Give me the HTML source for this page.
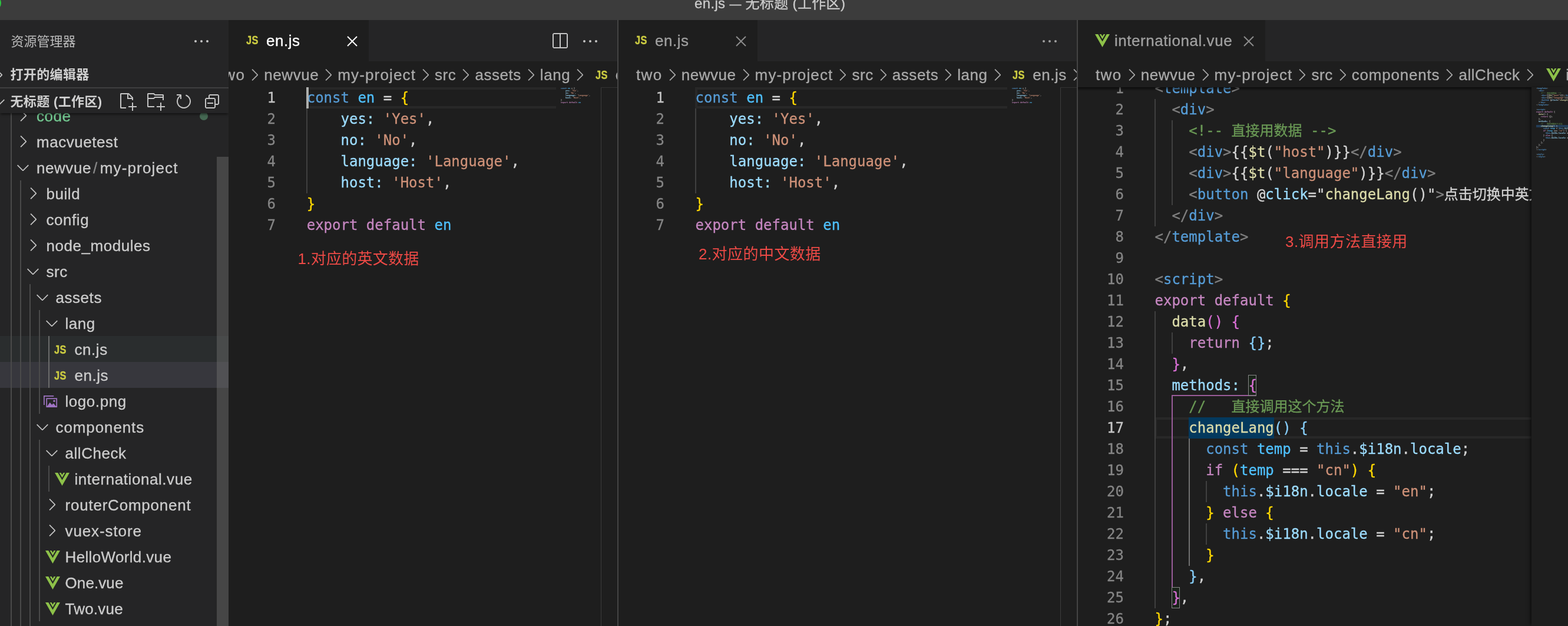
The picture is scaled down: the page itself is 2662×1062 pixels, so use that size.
<!DOCTYPE html>
<html lang="zh-CN"><head><meta charset="utf-8"><title>en.js — 无标题 (工作区)</title>
<style>
*{box-sizing:border-box}
html,body{margin:0;padding:0}
body{width:2662px;height:1062px;overflow:hidden;background:#1e1e1e;position:relative;
 font-family:"Liberation Sans","Noto Sans CJK SC",sans-serif;color:#cccccc}
div,svg{position:absolute}
#w{left:0;top:0;width:2662px;height:1062px;will-change:transform}
.titlebar{left:0;top:0;width:2662px;height:34px;background:#3c3c3c;overflow:hidden}
.title{left:1179px;top:-16px;height:44px;line-height:44px;font-size:24px;color:#cccccc;letter-spacing:.35px;white-space:nowrap}
.sidebar{left:0;top:34px;width:388px;height:1028px;background:#252526;overflow:hidden}
.sb{left:0;top:0;width:388px;height:1062px}
.tl,.tabt,.bct,.title{-webkit-text-stroke:.3px}
.tl{height:44px;line-height:44px;font-size:26px;letter-spacing:.55px;white-space:nowrap}
.tl .sep{color:#8a8a8a;margin:0 4px 0 3px;position:static}
.w2{position:static;letter-spacing:1.15px !important}
.w3{position:static;letter-spacing:1.4px !important}
.w4{position:static;letter-spacing:.8px !important}
.rowbg{left:0;width:388px;height:44px}
.js{font-weight:bold;line-height:28px;height:28px;white-space:nowrap;width:22px}
.js span,.bcjs span{position:static;display:inline-block;transform:scaleX(.78);transform-origin:0 50%;-webkit-text-stroke:.35px;letter-spacing:.6px}
.hdr{letter-spacing:.35px;font-size:22px;font-weight:bold;color:#d0d0d0;white-space:nowrap;height:44px;line-height:44px}
.tabs{top:34px;height:70px;background:#252526}
.tab{top:0;height:70px;background:#1e1e1e}
.tabt{top:0;height:70px;line-height:70px;font-size:26px;letter-spacing:.55px;white-space:nowrap}
.bc{top:104px;height:44px;overflow:hidden;background:#1e1e1e}
.bci{left:0;top:1px;height:44px;white-space:nowrap;display:flex;align-items:center;width:3000px}
.bci *{position:static;flex:none}
.bct{font-size:26px;letter-spacing:.55px;color:#a9a9a9;line-height:44px}
.bcc{margin:0}
.bcjs{font-weight:bold;font-size:21px;color:#cbcb41;margin:0 14px 0 10.6px;width:20px;display:inline-block;white-space:nowrap;line-height:28px}
.bcv{margin:0 8px 0 12.6px}
.ed{top:148px;height:914px;overflow:hidden;background:#1e1e1e}
.cl,.ln{font-family:"DejaVu Sans Mono","Liberation Mono","Noto Sans CJK SC",monospace;font-size:24px;height:36px;line-height:36px;white-space:pre}
.cl{color:#d4d4d4}
.cl,.ln{-webkit-text-stroke:.3px}
.cl span{position:static}
.ln{color:#858585;text-align:right}
.ln.act{color:#c6c6c6}
.k{color:#569cd6}.c{color:#4fc1ff}.p{color:#9cdcfe}.s{color:#ce9178}.x{color:#c586c0}
.b1{color:#ffd700}.b2{color:#da70d6}.b3{color:#87cefa}.g{color:#808080}.m{color:#6a9955}.f{color:#dcdcaa}
.bmb{border:1px solid #888888;background:rgba(0,100,0,.1);height:36px;width:14.4px}
.mm{transform:scale(.1384,.1111);transform-origin:0 0;width:1400px;height:1100px;opacity:.8}
.mm .cl{font-weight:bold}
.note{font-size:26px;color:#ee4a46;white-space:nowrap;height:40px;line-height:40px;letter-spacing:.45px}
.cur{height:36px;border:4px solid #282828;border-right:0}
</style></head>
<body><div id="w">
<div class="titlebar"><div style="left:-22px;top:-7px;width:24px;height:24px;border-radius:12px;background:#2bc840"></div><div class="title">en.js <span style="position:static;font-size:20px;letter-spacing:0">—</span> 无标题 (工作区)</div></div>
<div class="sidebar"><div class="sb" style="top:-34px">
<div class="rowbg" style="top:570px;background:#2a2d2e"></div>
<div class="rowbg" style="top:614px;background:#37373d"></div>
<div class="vl" style="left:18.0px;top:192px;height:870px;width:2px;background:#4a4a4a"></div>
<div class="vl" style="left:34.0px;top:306px;height:756px;width:2px;background:#4a4a4a"></div>
<div class="vl" style="left:50.0px;top:482px;height:580px;width:2px;background:#4a4a4a"></div>
<div class="vl" style="left:66.0px;top:526px;height:176px;width:2px;background:#4a4a4a"></div>
<div class="vl" style="left:82.0px;top:570px;height:88px;width:2px;background:#6b6b6b"></div>
<div class="vl" style="left:66.0px;top:746px;height:308px;width:2px;background:#4a4a4a"></div>
<div class="vl" style="left:82.0px;top:790px;height:44px;width:2px;background:#4a4a4a"></div>
<svg class="ic" style="left:23.0px;top:180.0px" width="32" height="32" viewBox="0 0 16 16"><path fill="#c5c5c5" d="M10.072 8.024L5.715 3.667l.618-.62L11 7.716v.618L6.333 13l-.618-.619 4.357-4.357z"/></svg>
<div class="tl" style="top:175px;left:62.0px;color:#73c991">code</div>
<div style="position:absolute;left:338.5px;top:190px;width:14px;height:14px;border-radius:7px;background:#73c991;opacity:.42"></div>
<svg class="ic" style="left:23.0px;top:224.0px" width="32" height="32" viewBox="0 0 16 16"><path fill="#c5c5c5" d="M10.072 8.024L5.715 3.667l.618-.62L11 7.716v.618L6.333 13l-.618-.619 4.357-4.357z"/></svg>
<div class="tl" style="top:219px;left:62.0px;color:#cccccc">macvuetest</div>
<svg class="ic" style="left:23.0px;top:268.0px" width="32" height="32" viewBox="0 0 16 16"><path fill="#c5c5c5" d="M7.976 10.072l4.357-4.357.62.618L8.284 11h-.618L3 6.333l.619-.618 4.357 4.357z"/></svg>
<div class="tl" style="top:263px;left:62.0px;color:#cccccc">newvue<span class="sep">/</span><span class="w2">my-project</span></div>
<svg class="ic" style="left:39.5px;top:312.0px" width="32" height="32" viewBox="0 0 16 16"><path fill="#c5c5c5" d="M10.072 8.024L5.715 3.667l.618-.62L11 7.716v.618L6.333 13l-.618-.619 4.357-4.357z"/></svg>
<div class="tl" style="top:307px;left:78.5px;color:#cccccc">build</div>
<svg class="ic" style="left:39.5px;top:356.0px" width="32" height="32" viewBox="0 0 16 16"><path fill="#c5c5c5" d="M10.072 8.024L5.715 3.667l.618-.62L11 7.716v.618L6.333 13l-.618-.619 4.357-4.357z"/></svg>
<div class="tl" style="top:351px;left:78.5px;color:#cccccc">config</div>
<svg class="ic" style="left:39.5px;top:400.0px" width="32" height="32" viewBox="0 0 16 16"><path fill="#c5c5c5" d="M10.072 8.024L5.715 3.667l.618-.62L11 7.716v.618L6.333 13l-.618-.619 4.357-4.357z"/></svg>
<div class="tl" style="top:395px;left:78.5px;color:#cccccc">node_modules</div>
<svg class="ic" style="left:39.5px;top:444.0px" width="32" height="32" viewBox="0 0 16 16"><path fill="#c5c5c5" d="M7.976 10.072l4.357-4.357.62.618L8.284 11h-.618L3 6.333l.619-.618 4.357 4.357z"/></svg>
<div class="tl" style="top:439px;left:78.5px;color:#cccccc">src</div>
<svg class="ic" style="left:55.5px;top:488.0px" width="32" height="32" viewBox="0 0 16 16"><path fill="#c5c5c5" d="M7.976 10.072l4.357-4.357.62.618L8.284 11h-.618L3 6.333l.619-.618 4.357 4.357z"/></svg>
<div class="tl" style="top:483px;left:94.5px;color:#cccccc">assets</div>
<svg class="ic" style="left:71.5px;top:532.0px" width="32" height="32" viewBox="0 0 16 16"><path fill="#c5c5c5" d="M7.976 10.072l4.357-4.357.62.618L8.284 11h-.618L3 6.333l.619-.618 4.357 4.357z"/></svg>
<div class="tl" style="top:527px;left:110.5px;color:#cccccc">lang</div>
<div class="js" style="left:91.5px;top:578.7px;font-size:21px;color:#cbcb41"><span>JS</span></div>
<div class="tl" style="top:571px;left:126.5px;color:#cccccc">cn.js</div>
<div class="js" style="left:91.5px;top:622.7px;font-size:21px;color:#cbcb41"><span>JS</span></div>
<div class="tl" style="top:615px;left:126.5px;color:#cccccc">en.js</div>
<svg class="ic" style="left:74.0px;top:670.5px" width="24" height="21" viewBox="0 0 24 21"><path fill="none" stroke="#a074c4" stroke-width="1.7" d="M0.9 16V0.9h16.3"/><rect x="5.2" y="5.2" width="17" height="14" fill="none" stroke="#a074c4" stroke-width="1.7"/><path fill="#a074c4" d="M5.5 19l5.2-7.2 3.4 4 2.6-2.6 5 5.8z"/><circle cx="18" cy="9.3" r="1.7" fill="#a074c4"/></svg>
<div class="tl" style="top:659px;left:110.5px;color:#cccccc">logo.png</div>
<svg class="ic" style="left:55.5px;top:708.0px" width="32" height="32" viewBox="0 0 16 16"><path fill="#c5c5c5" d="M7.976 10.072l4.357-4.357.62.618L8.284 11h-.618L3 6.333l.619-.618 4.357 4.357z"/></svg>
<div class="tl" style="top:703px;left:94.5px;color:#cccccc;letter-spacing:0.90px">components</div>
<svg class="ic" style="left:71.5px;top:752.0px" width="32" height="32" viewBox="0 0 16 16"><path fill="#c5c5c5" d="M7.976 10.072l4.357-4.357.62.618L8.284 11h-.618L3 6.333l.619-.618 4.357 4.357z"/></svg>
<div class="tl" style="top:747px;left:110.5px;color:#cccccc">allCheck</div>
<svg class="ic" style="left:93.0px;top:802.0px" width="25" height="22" viewBox="0 0 25 22"><path fill="#8dc149" d="M0 0h5.2l7.3 12.6L19.8 0H25L12.5 22z"/><path fill="#8dc149" d="M7.6 0h2.9l2 3.5 2-3.5h2.9l-4.9 8.6z"/></svg>
<div class="tl" style="top:791px;left:126.5px;color:#cccccc">international.vue</div>
<svg class="ic" style="left:71.5px;top:840.0px" width="32" height="32" viewBox="0 0 16 16"><path fill="#c5c5c5" d="M10.072 8.024L5.715 3.667l.618-.62L11 7.716v.618L6.333 13l-.618-.619 4.357-4.357z"/></svg>
<div class="tl" style="top:835px;left:110.5px;color:#cccccc;letter-spacing:0.78px">routerComponent</div>
<svg class="ic" style="left:71.5px;top:884.0px" width="32" height="32" viewBox="0 0 16 16"><path fill="#c5c5c5" d="M10.072 8.024L5.715 3.667l.618-.62L11 7.716v.618L6.333 13l-.618-.619 4.357-4.357z"/></svg>
<div class="tl" style="top:879px;left:110.5px;color:#cccccc;letter-spacing:0.90px">vuex-store</div>
<svg class="ic" style="left:77.0px;top:934.0px" width="25" height="22" viewBox="0 0 25 22"><path fill="#8dc149" d="M0 0h5.2l7.3 12.6L19.8 0H25L12.5 22z"/><path fill="#8dc149" d="M7.6 0h2.9l2 3.5 2-3.5h2.9l-4.9 8.6z"/></svg>
<div class="tl" style="top:923px;left:110.5px;color:#cccccc;letter-spacing:0.35px">HelloWorld.vue</div>
<svg class="ic" style="left:77.0px;top:978.0px" width="25" height="22" viewBox="0 0 25 22"><path fill="#8dc149" d="M0 0h5.2l7.3 12.6L19.8 0H25L12.5 22z"/><path fill="#8dc149" d="M7.6 0h2.9l2 3.5 2-3.5h2.9l-4.9 8.6z"/></svg>
<div class="tl" style="top:967px;left:110.5px;color:#cccccc;letter-spacing:0.10px">One.vue</div>
<svg class="ic" style="left:77.0px;top:1022.0px" width="25" height="22" viewBox="0 0 25 22"><path fill="#8dc149" d="M0 0h5.2l7.3 12.6L19.8 0H25L12.5 22z"/><path fill="#8dc149" d="M7.6 0h2.9l2 3.5 2-3.5h2.9l-4.9 8.6z"/></svg>
<div class="tl" style="top:1011px;left:110.5px;color:#cccccc;letter-spacing:0.22px">Two.vue</div>
<div style="left:368px;top:266px;width:20px;height:800px;background:rgba(121,121,121,.4)"></div>
<div style="left:0;top:34px;width:388px;height:158px;background:#252526;box-shadow:0 3px 4px -1px rgba(0,0,0,.55)"></div>
<div style="left:18.5px;top:49px;height:44px;line-height:44px;font-size:22px;color:#bbbbbb;white-space:nowrap">资源管理器</div>
<svg class="ic" style="left:326.0px;top:54.0px" width="32" height="32" viewBox="0 0 16 16"><circle cx="3" cy="8" r="1" fill="#c5c5c5"/><circle cx="8" cy="8" r="1" fill="#c5c5c5"/><circle cx="13" cy="8" r="1" fill="#c5c5c5"/></svg>
<div class="hdr" style="left:17.5px;top:104.5px">打开的编辑器</div>
<svg class="ic" style="left:-18.0px;top:111.0px" width="32" height="32" viewBox="0 0 16 16"><path fill="#c5c5c5" d="M10.072 8.024L5.715 3.667l.618-.62L11 7.716v.618L6.333 13l-.618-.619 4.357-4.357z"/></svg>
<div style="left:0;top:148px;width:388px;height:2px;background:#3f3f40"></div>
<div class="hdr" style="left:17.5px;top:151px">无标题 (工作区)</div>
<svg class="ic" style="left:-18.0px;top:157.0px" width="32" height="32" viewBox="0 0 16 16"><path fill="#c5c5c5" d="M7.976 10.072l4.357-4.357.62.618L8.284 11h-.618L3 6.333l.619-.618 4.357 4.357z"/></svg>
<svg class="ic" style="left:200px;top:156px" width="32" height="32" viewBox="0 0 16 16"><path fill="#c5c5c5" d="M9.5 1.1l3.4 3.5.1.4v2h-1V6H8V2H3v11h4v1H2.5l-.5-.5v-12l.5-.5h6.7l.3.1zM9 2v3h2.9L9 2zm4 14h-1v-3H9v-1h3V9h1v3h3v1h-3v3z"/></svg>
<svg class="ic" style="left:248px;top:156px" width="32" height="32" viewBox="0 0 16 16"><path fill="#c5c5c5" d="M14.5 2H7.71l-.85-.85L6.51 1h-5l-.5.5v11l.5.5H7v-1H1.99V6h4.49l.35-.15.86-.86H14v1.5l-.001.51h1.011V2.5L14.5 2zm-.51 2h-6.5l-.35.15-.86.86H2v-3h4.29l.85.85.36.15H14l-.01.99zM13 16h-1v-3H9v-1h3V9h1v3h3v1h-3v3z"/></svg>
<svg class="ic" style="left:296px;top:156px" width="32" height="32" viewBox="0 0 16 16"><path fill="#c5c5c5" d="M4.681 3H2V2h3.5l.5.5V6H5V4a5 5 0 1 0 4.53-.761l.302-.954A6 6 0 1 1 4.681 3z"/></svg>
<svg class="ic" style="left:344px;top:156px" width="32" height="32" viewBox="0 0 16 16"><path fill="#c5c5c5" d="M9 9H4v1h5V9z"/><path fill="#c5c5c5" d="M5 3l1-1h7l1 1v7l-1 1h-2v2l-1 1H3l-1-1V6l1-1h2V3zm1 2h4l1 1v4h2V3H6v2zm4 1H3v7h7V6z"/></svg>
</div></div>
<div class="tabs" style="left:388px;width:660px"></div>
<div class="tab" style="left:388px;top:34px;width:238px"></div>
<div class="js" style="left:418.0px;top:54.2px;font-size:21px;color:#cbcb41"><span>JS</span></div>
<div class="tabt" style="left:452px;top:34px;color:#ffffff">en.js</div>
<svg class="ic" style="left:581.5px;top:54.0px" width="32" height="32" viewBox="0 0 16 16"><path fill="#ffffff" d="M8 8.707l3.646 3.647.708-.707L8.707 8l3.647-3.646-.707-.708L8 7.293 4.354 3.646l-.707.708L7.293 8l-3.646 3.646.707.708L8 8.707z"/></svg>
<svg class="ic" style="left:934px;top:54px" width="32" height="32" viewBox="0 0 16 16"><path fill="#c5c5c5" d="M14 1H3L2 2v11l1 1h11l1-1V2l-1-1zM8 13H3V2h5v11zm6 0H9V2h5v11z"/></svg>
<svg class="ic" style="left:986.0px;top:54.0px" width="32" height="32" viewBox="0 0 16 16"><circle cx="3" cy="8" r="1" fill="#c5c5c5"/><circle cx="8" cy="8" r="1" fill="#c5c5c5"/><circle cx="13" cy="8" r="1" fill="#c5c5c5"/></svg>
<div class="bc" style="left:388px;width:660px"><div class="bci" style="left:-16.4px"><span class="bct w3">two</span><svg class="bcc" width="32" height="32" viewBox="0 0 16 16"><path fill="#a9a9a9" d="M10.072 8.024L5.715 3.667l.618-.62L11 7.716v.618L6.333 13l-.618-.619 4.357-4.357z"/></svg><span class="bct">newvue</span><svg class="bcc" width="32" height="32" viewBox="0 0 16 16"><path fill="#a9a9a9" d="M10.072 8.024L5.715 3.667l.618-.62L11 7.716v.618L6.333 13l-.618-.619 4.357-4.357z"/></svg><span class="bct w2">my-project</span><svg class="bcc" width="32" height="32" viewBox="0 0 16 16"><path fill="#a9a9a9" d="M10.072 8.024L5.715 3.667l.618-.62L11 7.716v.618L6.333 13l-.618-.619 4.357-4.357z"/></svg><span class="bct">src</span><svg class="bcc" width="32" height="32" viewBox="0 0 16 16"><path fill="#a9a9a9" d="M10.072 8.024L5.715 3.667l.618-.62L11 7.716v.618L6.333 13l-.618-.619 4.357-4.357z"/></svg><span class="bct">assets</span><svg class="bcc" width="32" height="32" viewBox="0 0 16 16"><path fill="#a9a9a9" d="M10.072 8.024L5.715 3.667l.618-.62L11 7.716v.618L6.333 13l-.618-.619 4.357-4.357z"/></svg><span class="bct">lang</span><svg class="bcc" width="32" height="32" viewBox="0 0 16 16"><path fill="#a9a9a9" d="M10.072 8.024L5.715 3.667l.618-.62L11 7.716v.618L6.333 13l-.618-.619 4.357-4.357z"/></svg><span class="bcjs"><span>JS</span></span><span class="bct">en.js</span></div></div>
<div class="ed" style="left:388px;width:660px"><div style="left:-388px;top:-148px;width:2662px;height:1062px">
<div class="cur" style="left:520px;top:148px;width:424px"></div>
<div class="vl" style="left:519.5px;top:184px;height:144px;width:2px;background:#404040"></div>
<div class="ln act" style="top:148px;left:388px;width:80px">1</div>
<div class="cl" style="top:148px;left:520.7px"><span class="k">const</span> <span class="c">en</span> = <span class="b1">{</span></div>
<div class="ln" style="top:184px;left:388px;width:80px">2</div>
<div class="cl" style="top:184px;left:520.7px">    <span class="p">yes:</span> <span class="s">'Yes'</span>,</div>
<div class="ln" style="top:220px;left:388px;width:80px">3</div>
<div class="cl" style="top:220px;left:520.7px">    <span class="p">no:</span> <span class="s">'No'</span>,</div>
<div class="ln" style="top:256px;left:388px;width:80px">4</div>
<div class="cl" style="top:256px;left:520.7px">    <span class="p">language:</span> <span class="s">'Language'</span>,</div>
<div class="ln" style="top:292px;left:388px;width:80px">5</div>
<div class="cl" style="top:292px;left:520.7px">    <span class="p">host:</span> <span class="s">'Host'</span>,</div>
<div class="ln" style="top:328px;left:388px;width:80px">6</div>
<div class="cl" style="top:328px;left:520.7px"><span class="b1">}</span></div>
<div class="ln" style="top:364px;left:388px;width:80px">7</div>
<div class="cl" style="top:364px;left:520.7px"><span class="x">export</span> <span class="x">default</span> <span class="c">en</span></div>
<div style="left:520px;top:148px;width:4px;height:36px;background:#aeafad"></div>
<div class="note" style="left:505.5px;top:419px;letter-spacing:.25px">1.对应的英文数据</div>
<div class="mm" style="left:952.0px;top:148.0px">
<div class="cl" style="top:0px;left:0"><span class="k">const</span> <span class="c">en</span> = {</div>
<div class="cl" style="top:36px;left:0">    <span class="p">yes:</span> <span class="s">'Yes'</span>,</div>
<div class="cl" style="top:72px;left:0">    <span class="p">no:</span> <span class="s">'No'</span>,</div>
<div class="cl" style="top:108px;left:0">    <span class="p">language:</span> <span class="s">'Language'</span>,</div>
<div class="cl" style="top:144px;left:0">    <span class="p">host:</span> <span class="s">'Host'</span>,</div>
<div class="cl" style="top:180px;left:0">}</div>
<div class="cl" style="top:216px;left:0"><span class="x">export</span> <span class="x">default</span> <span class="c">en</span></div>
</div>
<div style="left:1020px;top:148px;width:1px;height:914px;background:#3c3c3c"></div>
<div style="left:1020px;top:148px;width:28px;height:1px;background:#333333"></div>
</div></div>
<div style="left:1048px;top:34px;width:2px;height:1028px;background:#444444"></div>
<div class="tabs" style="left:1050px;width:778px"></div>
<div class="tab" style="left:1050px;top:34px;width:236px"></div>
<div class="js" style="left:1078.0px;top:54.2px;font-size:21px;color:#cbcb41"><span>JS</span></div>
<div class="tabt" style="left:1112px;top:34px;color:#a0a0a0">en.js</div>
<svg class="ic" style="left:1242.0px;top:54.0px" width="32" height="32" viewBox="0 0 16 16"><path fill="#8c8c8c" d="M8 8.707l3.646 3.647.708-.707L8.707 8l3.647-3.646-.707-.708L8 7.293 4.354 3.646l-.707.708L7.293 8l-3.646 3.646.707.708L8 8.707z"/></svg>
<svg class="ic" style="left:1766.0px;top:54.0px" width="32" height="32" viewBox="0 0 16 16"><circle cx="3" cy="8" r="1" fill="#a0a0a0"/><circle cx="8" cy="8" r="1" fill="#a0a0a0"/><circle cx="13" cy="8" r="1" fill="#a0a0a0"/></svg>
<div class="bc" style="left:1050px;width:778px"><div class="bci" style="left:30px"><span class="bct w3">two</span><svg class="bcc" width="32" height="32" viewBox="0 0 16 16"><path fill="#a9a9a9" d="M10.072 8.024L5.715 3.667l.618-.62L11 7.716v.618L6.333 13l-.618-.619 4.357-4.357z"/></svg><span class="bct">newvue</span><svg class="bcc" width="32" height="32" viewBox="0 0 16 16"><path fill="#a9a9a9" d="M10.072 8.024L5.715 3.667l.618-.62L11 7.716v.618L6.333 13l-.618-.619 4.357-4.357z"/></svg><span class="bct w2">my-project</span><svg class="bcc" width="32" height="32" viewBox="0 0 16 16"><path fill="#a9a9a9" d="M10.072 8.024L5.715 3.667l.618-.62L11 7.716v.618L6.333 13l-.618-.619 4.357-4.357z"/></svg><span class="bct">src</span><svg class="bcc" width="32" height="32" viewBox="0 0 16 16"><path fill="#a9a9a9" d="M10.072 8.024L5.715 3.667l.618-.62L11 7.716v.618L6.333 13l-.618-.619 4.357-4.357z"/></svg><span class="bct">assets</span><svg class="bcc" width="32" height="32" viewBox="0 0 16 16"><path fill="#a9a9a9" d="M10.072 8.024L5.715 3.667l.618-.62L11 7.716v.618L6.333 13l-.618-.619 4.357-4.357z"/></svg><span class="bct">lang</span><svg class="bcc" width="32" height="32" viewBox="0 0 16 16"><path fill="#a9a9a9" d="M10.072 8.024L5.715 3.667l.618-.62L11 7.716v.618L6.333 13l-.618-.619 4.357-4.357z"/></svg><span class="bcjs"><span>JS</span></span><span class="bct">en.js</span><svg class="bcc" width="32" height="32" viewBox="0 0 16 16"><path fill="#a9a9a9" d="M10.072 8.024L5.715 3.667l.618-.62L11 7.716v.618L6.333 13l-.618-.619 4.357-4.357z"/></svg></div></div>
<div class="ed" style="left:1050px;width:778px"><div style="left:-1050px;top:-148px;width:2662px;height:1062px">
<div class="cur" style="left:1180px;top:148px;width:530px"></div>
<div class="vl" style="left:1179.5px;top:184px;height:144px;width:2px;background:#404040"></div>
<div class="ln act" style="top:148px;left:1048px;width:80px">1</div>
<div class="cl" style="top:148px;left:1180.5px"><span class="k">const</span> <span class="c">en</span> = <span class="b1">{</span></div>
<div class="ln" style="top:184px;left:1048px;width:80px">2</div>
<div class="cl" style="top:184px;left:1180.5px">    <span class="p">yes:</span> <span class="s">'Yes'</span>,</div>
<div class="ln" style="top:220px;left:1048px;width:80px">3</div>
<div class="cl" style="top:220px;left:1180.5px">    <span class="p">no:</span> <span class="s">'No'</span>,</div>
<div class="ln" style="top:256px;left:1048px;width:80px">4</div>
<div class="cl" style="top:256px;left:1180.5px">    <span class="p">language:</span> <span class="s">'Language'</span>,</div>
<div class="ln" style="top:292px;left:1048px;width:80px">5</div>
<div class="cl" style="top:292px;left:1180.5px">    <span class="p">host:</span> <span class="s">'Host'</span>,</div>
<div class="ln" style="top:328px;left:1048px;width:80px">6</div>
<div class="cl" style="top:328px;left:1180.5px"><span class="b1">}</span></div>
<div class="ln" style="top:364px;left:1048px;width:80px">7</div>
<div class="cl" style="top:364px;left:1180.5px"><span class="x">export</span> <span class="x">default</span> <span class="c">en</span></div>
<div class="note" style="left:1186px;top:411px">2.对应的中文数据</div>
<div class="mm" style="left:1718.0px;top:148.0px">
<div class="cl" style="top:0px;left:0"><span class="k">const</span> <span class="c">en</span> = {</div>
<div class="cl" style="top:36px;left:0">    <span class="p">yes:</span> <span class="s">'Yes'</span>,</div>
<div class="cl" style="top:72px;left:0">    <span class="p">no:</span> <span class="s">'No'</span>,</div>
<div class="cl" style="top:108px;left:0">    <span class="p">language:</span> <span class="s">'Language'</span>,</div>
<div class="cl" style="top:144px;left:0">    <span class="p">host:</span> <span class="s">'Host'</span>,</div>
<div class="cl" style="top:180px;left:0">}</div>
<div class="cl" style="top:216px;left:0"><span class="x">export</span> <span class="x">default</span> <span class="c">en</span></div>
</div>
<div style="left:1800px;top:148px;width:1px;height:914px;background:#3c3c3c"></div>
<div style="left:1800px;top:148px;width:28px;height:1px;background:#333333"></div>
</div></div>
<div style="left:1828px;top:34px;width:2px;height:1028px;background:#444444"></div>
<div class="tabs" style="left:1830px;width:832px"></div>
<div class="tab" style="left:1830px;top:34px;width:318px"></div>
<svg class="ic" style="left:1859.0px;top:58.0px" width="25" height="22" viewBox="0 0 25 22"><path fill="#8dc149" d="M0 0h5.2l7.3 12.6L19.8 0H25L12.5 22z"/><path fill="#8dc149" d="M7.6 0h2.9l2 3.5 2-3.5h2.9l-4.9 8.6z"/></svg>
<div class="tabt" style="left:1892px;top:34px;color:#a0a0a0">international.vue</div>
<svg class="ic" style="left:2104.0px;top:54.0px" width="32" height="32" viewBox="0 0 16 16"><path fill="#8c8c8c" d="M8 8.707l3.646 3.647.708-.707L8.707 8l3.647-3.646-.707-.708L8 7.293 4.354 3.646l-.707.708L7.293 8l-3.646 3.646.707.708L8 8.707z"/></svg>
<div class="bc" style="left:1830px;width:832px"><div class="bci" style="left:30px"><span class="bct w3">two</span><svg class="bcc" width="32" height="32" viewBox="0 0 16 16"><path fill="#a9a9a9" d="M10.072 8.024L5.715 3.667l.618-.62L11 7.716v.618L6.333 13l-.618-.619 4.357-4.357z"/></svg><span class="bct">newvue</span><svg class="bcc" width="32" height="32" viewBox="0 0 16 16"><path fill="#a9a9a9" d="M10.072 8.024L5.715 3.667l.618-.62L11 7.716v.618L6.333 13l-.618-.619 4.357-4.357z"/></svg><span class="bct w2">my-project</span><svg class="bcc" width="32" height="32" viewBox="0 0 16 16"><path fill="#a9a9a9" d="M10.072 8.024L5.715 3.667l.618-.62L11 7.716v.618L6.333 13l-.618-.619 4.357-4.357z"/></svg><span class="bct">src</span><svg class="bcc" width="32" height="32" viewBox="0 0 16 16"><path fill="#a9a9a9" d="M10.072 8.024L5.715 3.667l.618-.62L11 7.716v.618L6.333 13l-.618-.619 4.357-4.357z"/></svg><span class="bct w4">components</span><svg class="bcc" width="32" height="32" viewBox="0 0 16 16"><path fill="#a9a9a9" d="M10.072 8.024L5.715 3.667l.618-.62L11 7.716v.618L6.333 13l-.618-.619 4.357-4.357z"/></svg><span class="bct">allCheck</span><svg class="bcc" width="32" height="32" viewBox="0 0 16 16"><path fill="#a9a9a9" d="M10.072 8.024L5.715 3.667l.618-.62L11 7.716v.618L6.333 13l-.618-.619 4.357-4.357z"/></svg><svg class="bcv" width="25" height="22" viewBox="0 0 25 22"><path fill="#8dc149" d="M0 0h5.2l7.3 12.6L19.8 0H25L12.5 22z"/><path fill="#8dc149" d="M7.6 0h2.9l2 3.5 2-3.5h2.9l-4.9 8.6z"/></svg><span class="bct">international.vue</span></div></div>
<div class="ed" style="left:1830px;width:770px"><div style="left:-1830px;top:-148px;width:2662px;height:1062px">
<div class="cur" style="left:1960px;top:708px;width:642px"></div>
<div class="vl" style="left:1960.0px;top:168px;height:216px;width:2px;background:#404040"></div>
<div class="vl" style="left:1988.9px;top:204px;height:144px;width:2px;background:#404040"></div>
<div class="vl" style="left:1960.0px;top:528px;height:504px;width:2px;background:#404040"></div>
<div class="vl" style="left:1988.9px;top:564px;height:36px;width:2px;background:#404040"></div>
<div class="vl" style="left:1988.9px;top:672px;height:324px;width:2px;background:#9a5c99"></div>
<div style="left:1988.9px;top:670px;width:144.5px;height:2px;background:#9a5c99"></div>
<div style="left:2018.3px;top:708px;width:144.5px;height:36px;background:#04395e"></div>
<div class="bmb" style="left:2118.8px;top:636px"></div>
<div class="bmb" style="left:1988.8px;top:996px"></div>
<div class="vl" style="left:2017.8px;top:744px;height:216px;width:2px;background:#707070"></div>
<div class="vl" style="left:2046.7px;top:816px;height:36px;width:2px;background:#404040"></div>
<div class="vl" style="left:2046.7px;top:888px;height:36px;width:2px;background:#404040"></div>
<div class="ln" style="top:132px;left:1828px;width:80px">1</div>
<div class="cl" style="top:132px;left:1960.5px"><span class="g">&lt;</span><span class="k">template</span><span class="g">&gt;</span></div>
<div class="ln" style="top:168px;left:1828px;width:80px">2</div>
<div class="cl" style="top:168px;left:1960.5px">  <span class="g">&lt;</span><span class="k">div</span><span class="g">&gt;</span></div>
<div class="ln" style="top:204px;left:1828px;width:80px">3</div>
<div class="cl" style="top:204px;left:1960.5px">    <span class="m">&lt;!-- 直接用数据 --&gt;</span></div>
<div class="ln" style="top:240px;left:1828px;width:80px">4</div>
<div class="cl" style="top:240px;left:1960.5px">    <span class="g">&lt;</span><span class="k">div</span><span class="g">&gt;</span>{{<span class="f">$t</span>(<span class="s">"host"</span>)}}<span class="g">&lt;/</span><span class="k">div</span><span class="g">&gt;</span></div>
<div class="ln" style="top:276px;left:1828px;width:80px">5</div>
<div class="cl" style="top:276px;left:1960.5px">    <span class="g">&lt;</span><span class="k">div</span><span class="g">&gt;</span>{{<span class="f">$t</span>(<span class="s">"language"</span>)}}<span class="g">&lt;/</span><span class="k">div</span><span class="g">&gt;</span></div>
<div class="ln" style="top:312px;left:1828px;width:80px">6</div>
<div class="cl" style="top:312px;left:1960.5px">    <span class="g">&lt;</span><span class="k">button</span> @<span class="p">click</span>="<span class="f">changeLang</span>()"<span class="g">&gt;</span>点击切换中英文<span class="g">&lt;/</span><span class="k">button</span><span class="g">&gt;</span></div>
<div class="ln" style="top:348px;left:1828px;width:80px">7</div>
<div class="cl" style="top:348px;left:1960.5px">  <span class="g">&lt;/</span><span class="k">div</span><span class="g">&gt;</span></div>
<div class="ln" style="top:384px;left:1828px;width:80px">8</div>
<div class="cl" style="top:384px;left:1960.5px"><span class="g">&lt;/</span><span class="k">template</span><span class="g">&gt;</span></div>
<div class="ln" style="top:420px;left:1828px;width:80px">9</div>
<div class="ln" style="top:456px;left:1828px;width:80px">10</div>
<div class="cl" style="top:456px;left:1960.5px"><span class="g">&lt;</span><span class="k">script</span><span class="g">&gt;</span></div>
<div class="ln" style="top:492px;left:1828px;width:80px">11</div>
<div class="cl" style="top:492px;left:1960.5px"><span class="x">export</span> <span class="x">default</span> <span class="b1">{</span></div>
<div class="ln" style="top:528px;left:1828px;width:80px">12</div>
<div class="cl" style="top:528px;left:1960.5px">  <span class="f">data</span><span class="b2">()</span> <span class="b2">{</span></div>
<div class="ln" style="top:564px;left:1828px;width:80px">13</div>
<div class="cl" style="top:564px;left:1960.5px">    <span class="x">return</span> <span class="b3">{}</span>;</div>
<div class="ln" style="top:600px;left:1828px;width:80px">14</div>
<div class="cl" style="top:600px;left:1960.5px">  <span class="b2">}</span>,</div>
<div class="ln" style="top:636px;left:1828px;width:80px">15</div>
<div class="cl" style="top:636px;left:1960.5px">  <span class="p">methods:</span> <span class="b2 bm">{</span></div>
<div class="ln" style="top:672px;left:1828px;width:80px">16</div>
<div class="cl" style="top:672px;left:1960.5px">    <span class="m">//   直接调用这个方法</span></div>
<div class="ln act" style="top:708px;left:1828px;width:80px">17</div>
<div class="cl" style="top:708px;left:1960.5px">    <span class="f sel">changeLang</span><span class="b3">()</span> <span class="b3">{</span></div>
<div class="ln" style="top:744px;left:1828px;width:80px">18</div>
<div class="cl" style="top:744px;left:1960.5px">      <span class="k">const</span> <span class="c">temp</span> = <span class="k">this</span>.<span class="p">$i18n</span>.<span class="p">locale</span>;</div>
<div class="ln" style="top:780px;left:1828px;width:80px">19</div>
<div class="cl" style="top:780px;left:1960.5px">      <span class="x">if</span> <span class="b1">(</span><span class="c">temp</span> === <span class="s">"cn"</span><span class="b1">)</span> <span class="b1">{</span></div>
<div class="ln" style="top:816px;left:1828px;width:80px">20</div>
<div class="cl" style="top:816px;left:1960.5px">        <span class="k">this</span>.<span class="p">$i18n</span>.<span class="p">locale</span> = <span class="s">"en"</span>;</div>
<div class="ln" style="top:852px;left:1828px;width:80px">21</div>
<div class="cl" style="top:852px;left:1960.5px">      <span class="b1">}</span> <span class="x">else</span> <span class="b1">{</span></div>
<div class="ln" style="top:888px;left:1828px;width:80px">22</div>
<div class="cl" style="top:888px;left:1960.5px">        <span class="k">this</span>.<span class="p">$i18n</span>.<span class="p">locale</span> = <span class="s">"cn"</span>;</div>
<div class="ln" style="top:924px;left:1828px;width:80px">23</div>
<div class="cl" style="top:924px;left:1960.5px">      <span class="b1">}</span></div>
<div class="ln" style="top:960px;left:1828px;width:80px">24</div>
<div class="cl" style="top:960px;left:1960.5px">    <span class="b3">}</span>,</div>
<div class="ln" style="top:996px;left:1828px;width:80px">25</div>
<div class="cl" style="top:996px;left:1960.5px">  <span class="b2 bm">}</span>,</div>
<div class="ln" style="top:1032px;left:1828px;width:80px">26</div>
<div class="cl" style="top:1032px;left:1960.5px"><span class="b1">}</span>;</div>
<div class="note" style="left:2182px;top:390px">3.调用方法直接用</div>
</div></div>
<div style="left:1830px;top:148px;width:770px;height:6px;background:linear-gradient(rgba(0,0,0,.6),rgba(0,0,0,0))"></div>
<div style="left:2600px;top:148px;width:62px;height:914px;background:#1e1e1e;box-shadow:-4px 0 6px -2px rgba(0,0,0,.6)"></div>
<div style="left:2608px;top:212px;width:54px;height:4px;background:#264f78;opacity:.65"></div>
<div class="mm" style="left:2608.0px;top:148.0px">
<div class="cl" style="top:0px;left:0"><span class="g">&lt;</span><span class="k">template</span><span class="g">&gt;</span></div>
<div class="cl" style="top:36px;left:0">  <span class="g">&lt;</span><span class="k">div</span><span class="g">&gt;</span></div>
<div class="cl" style="top:72px;left:0">    <span class="m">&lt;!-- 直接用数据 --&gt;</span></div>
<div class="cl" style="top:108px;left:0">    <span class="g">&lt;</span><span class="k">div</span><span class="g">&gt;</span>{{<span class="f">$t</span>(<span class="s">"host"</span>)}}<span class="g">&lt;/</span><span class="k">div</span><span class="g">&gt;</span></div>
<div class="cl" style="top:144px;left:0">    <span class="g">&lt;</span><span class="k">div</span><span class="g">&gt;</span>{{<span class="f">$t</span>(<span class="s">"language"</span>)}}<span class="g">&lt;/</span><span class="k">div</span><span class="g">&gt;</span></div>
<div class="cl" style="top:180px;left:0">    <span class="g">&lt;</span><span class="k">button</span> @<span class="p">click</span>="<span class="f">changeLang</span>()"<span class="g">&gt;</span>点击切换中英文<span class="g">&lt;/</span><span class="k">button</span><span class="g">&gt;</span></div>
<div class="cl" style="top:216px;left:0">  <span class="g">&lt;/</span><span class="k">div</span><span class="g">&gt;</span></div>
<div class="cl" style="top:252px;left:0"><span class="g">&lt;/</span><span class="k">template</span><span class="g">&gt;</span></div>
<div class="cl" style="top:324px;left:0"><span class="g">&lt;</span><span class="k">script</span><span class="g">&gt;</span></div>
<div class="cl" style="top:360px;left:0"><span class="x">export</span> <span class="x">default</span> {</div>
<div class="cl" style="top:396px;left:0">  <span class="f">data</span>() {</div>
<div class="cl" style="top:432px;left:0">    <span class="x">return</span> {};</div>
<div class="cl" style="top:468px;left:0">  },</div>
<div class="cl" style="top:504px;left:0">  <span class="p">methods:</span> {</div>
<div class="cl" style="top:540px;left:0">    <span class="m">//   直接调用这个方法</span></div>
<div class="cl" style="top:576px;left:0">    <span class="f">changeLang</span>() {</div>
<div class="cl" style="top:612px;left:0">      <span class="k">const</span> <span class="c">temp</span> = <span class="k">this</span>.<span class="p">$i18n</span>.<span class="p">locale</span>;</div>
<div class="cl" style="top:648px;left:0">      <span class="x">if</span> (<span class="c">temp</span> === <span class="s">"cn"</span>) {</div>
<div class="cl" style="top:684px;left:0">        <span class="k">this</span>.<span class="p">$i18n</span>.<span class="p">locale</span> = <span class="s">"en"</span>;</div>
<div class="cl" style="top:720px;left:0">      } <span class="x">else</span> {</div>
<div class="cl" style="top:756px;left:0">        <span class="k">this</span>.<span class="p">$i18n</span>.<span class="p">locale</span> = <span class="s">"cn"</span>;</div>
<div class="cl" style="top:792px;left:0">      }</div>
<div class="cl" style="top:828px;left:0">    },</div>
<div class="cl" style="top:864px;left:0">  },</div>
<div class="cl" style="top:900px;left:0">};</div>
<div class="cl" style="top:936px;left:0"><span class="g">&lt;/</span><span class="k">script</span><span class="g">&gt;</span></div>
<div class="cl" style="top:1008px;left:0"><span class="g">&lt;</span><span class="k">style</span><span class="g">&gt;</span></div>
<div class="cl" style="top:1044px;left:0"><span class="g">&lt;/</span><span class="k">style</span><span class="g">&gt;</span></div>
</div>
</div></body></html>
